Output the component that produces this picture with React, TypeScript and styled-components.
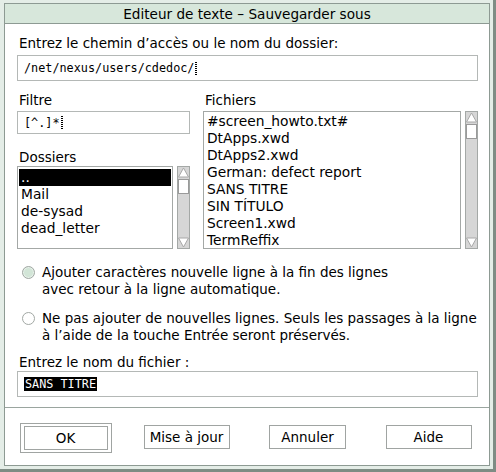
import React from "react";
import styled, { createGlobalStyle } from "styled-components";

const GlobalStyle = createGlobalStyle`
  html, body { margin: 0; padding: 0; background: #ffffff; }
  * { box-sizing: border-box; }
`;

const sans = `"DejaVu Sans", "Liberation Sans", sans-serif`;
const mono = `"DejaVu Sans Mono", "Liberation Mono", monospace`;

const Frame = styled.div`
  width: 496px;
  height: 472px;
  display: flex;
  flex-direction: column;
  background: #e4ede7;
  padding: 3px 3px 3px 4px;
  border-right: 3px solid #7e8c84;
  border-bottom: 3px solid #7e8c84;
  font-family: ${sans};
  color: #000;
`;

const Inner = styled.div`
  flex: 1;
  display: flex;
  flex-direction: column;
  background: #ffffff;
  border: 1px solid #8d9a93;
`;

const TitleBar = styled.div`
  height: 20px;
  background: #d7e7db;
  border-bottom: 1px solid #8d9a93;
  display: flex;
  align-items: center;
  justify-content: center;
  font-size: 13.6px;
`;

const Body = styled.div`
  padding: 11px 11px 10px 12px;
  display: flex;
  flex-direction: column;
`;

const Label = styled.div<{ $top?: number }>`
  font-size: 13.5px;
  line-height: 17px;
  height: 17px;
  padding-left: 2px;
  margin-top: ${(p) => p.$top ?? 0}px;
`;

const Field = styled.div<{ $h: number }>`
  height: ${(p) => p.$h}px;
  border: 1px solid #b4b8b6;
  display: flex;
  align-items: center;
  padding-left: 6px;
  font-family: ${mono};
  font-size: 11.8px;
  margin-top: 2px;
`;

const Caret = styled.span`
  display: inline-block;
  width: 2px;
  height: 13px;
  margin-left: 1px;
  background-image: linear-gradient(#000 50%, transparent 50%);
  background-size: 2px 2px;
`;

const Selected = styled.span`
  background: #000;
  color: #fff;
  padding: 0 1px;
`;

const Columns = styled.div`
  display: grid;
  grid-template-columns: 173px 1fr;
  column-gap: 13px;
  margin-top: 11px;
`;

const Column = styled.div`
  display: flex;
  flex-direction: column;
`;

const ListRow = styled.div<{ $h: number }>`
  display: flex;
  gap: 4px;
  height: ${(p) => p.$h}px;
  margin-top: 2px;
`;

const ListBox = styled.div<{ $pad: number }>`
  flex: 1;
  border: 1px solid #a4a8a6;
  padding: ${(p) => p.$pad}px 1px 0 1px;
  overflow: hidden;
`;

const Item = styled.div<{ $sel?: boolean }>`
  font-size: 13.8px;
  line-height: 17px;
  height: 17px;
  padding-left: 2px;
  white-space: nowrap;
  background: ${(p) => (p.$sel ? "#000" : "transparent")};
  color: ${(p) => (p.$sel ? "#fff" : "#000")};
`;

const Scrollbar = styled.div`
  width: 13px;
  background: #d6d6d6;
  border: 1px solid #a4a8a6;
  display: flex;
  flex-direction: column;
  align-items: center;
`;

const Thumb = styled.div`
  width: 11px;
  height: 15px;
  background: #ffffff;
  border: 1px solid #9a9a9a;
  margin-top: 1px;
`;

const Spacer = styled.div`
  flex: 1;
`;

const Arrow = ({ down }: { down?: boolean }) => (
  <svg width="11" height="11" viewBox="0 0 11 11">
    <polygon
      points={down ? "0.5,1 10.5,1 5.5,10" : "5.5,1 10.5,10 0.5,10"}
      fill="#ffffff"
      stroke="#a8a8a8"
      strokeWidth="1"
    />
  </svg>
);

const Scroll = () => (
  <Scrollbar>
    <Arrow />
    <Thumb />
    <Spacer />
    <Arrow down />
  </Scrollbar>
);

const RadioRow = styled.div<{ $top: number }>`
  display: flex;
  gap: 7px;
  margin-top: ${(p) => p.$top}px;
  padding-left: 5px;
`;

const RadioDot = styled.div<{ $on?: boolean }>`
  width: 13px;
  height: 13px;
  border-radius: 50%;
  margin-top: 2px;
  border: 1px solid #a2a8a4;
  background: ${(p) => (p.$on ? "#d2e5d7" : "#ffffff")};
  box-shadow: ${(p) => (p.$on ? "inset 0 0 0 1px #e8f1ea" : "none")};
  flex: none;
`;

const RadioText = styled.div`
  font-size: 13.5px;
  line-height: 17px;
`;

const Separator = styled.div`
  border-top: 1px solid #9aa59f;
`;

const Footer = styled.div`
  flex: 1;
  display: grid;
  grid-template-columns: repeat(4, 1fr);
  justify-items: center;
  align-items: start;
  padding-top: 15px;
`;

const DefaultRing = styled.div`
  border: 1px solid #a0a4a2;
  padding: 2px 3px 2px 3px;
`;

const Button = styled.button<{ $w: number }>`
  width: ${(p) => p.$w}px;
  height: 24px;
  background: #ffffff;
  border: 1px solid #a0a4a2;
  font-family: ${sans};
  font-size: 13.5px;
  color: #000;
  padding: 0;
  margin-top: 2px;
  ${DefaultRing} & {
    margin-top: 0;
  }
`;

const folders = ["..", "Mail", "de-sysad", "dead_letter"];
const files = [
  "#screen_howto.txt#",
  "DtApps.xwd",
  "DtApps2.xwd",
  "German: defect report",
  "SANS TITRE",
  "SIN TÍTULO",
  "Screen1.xwd",
  "TermReffix",
];

export default function App() {
  return (
    <>
      <GlobalStyle />
      <Frame>
        <Inner>
          <TitleBar>Editeur de texte – Sauvegarder sous</TitleBar>
          <Body>
            <Label>Entrez le chemin d’accès ou le nom du dossier:</Label>
            <Field $h={26} style={{ marginTop: 3 }}>
              /net/nexus/users/cdedoc/
              <Caret />
            </Field>
            <Columns>
              <Column>
                <Label>Filtre</Label>
                <Field $h={23}>
                  [^.]*
                  <Caret />
                </Field>
                <Label $top={15}>Dossiers</Label>
                <ListRow $h={83} style={{ marginTop: 0 }}>
                  <ListBox $pad={2}>
                    {folders.map((f, i) => (
                      <Item key={f} $sel={i === 0}>
                        {f}
                      </Item>
                    ))}
                  </ListBox>
                  <Scroll />
                </ListRow>
              </Column>
              <Column>
                <Label>Fichiers</Label>
                <ListRow $h={138}>
                  <ListBox $pad={1}>
                    {files.map((f) => (
                      <Item key={f}>{f}</Item>
                    ))}
                  </ListBox>
                  <Scroll />
                </ListRow>
              </Column>
            </Columns>
            <RadioRow $top={15}>
              <RadioDot $on />
              <RadioText>
                Ajouter caractères nouvelle ligne à la fin des lignes
                <br />
                avec retour à la ligne automatique.
              </RadioText>
            </RadioRow>
            <RadioRow $top={12}>
              <RadioDot />
              <RadioText>
                Ne pas ajouter de nouvelles lignes. Seuls les passages à la ligne
                <br />à l’aide de la touche Entrée seront préservés.
              </RadioText>
            </RadioRow>
            <Label $top={10}>Entrez le nom du fichier :</Label>
            <Field $h={26} style={{ marginTop: 0 }}>
              <Selected>SANS TITRE</Selected>
            </Field>
          </Body>
          <Separator />
          <Footer>
            <DefaultRing>
              <Button $w={84}>OK</Button>
            </DefaultRing>
            <Button $w={86}>Mise à jour</Button>
            <Button $w={77}>Annuler</Button>
            <Button $w={86}>Aide</Button>
          </Footer>
        </Inner>
      </Frame>
    </>
  );
}
